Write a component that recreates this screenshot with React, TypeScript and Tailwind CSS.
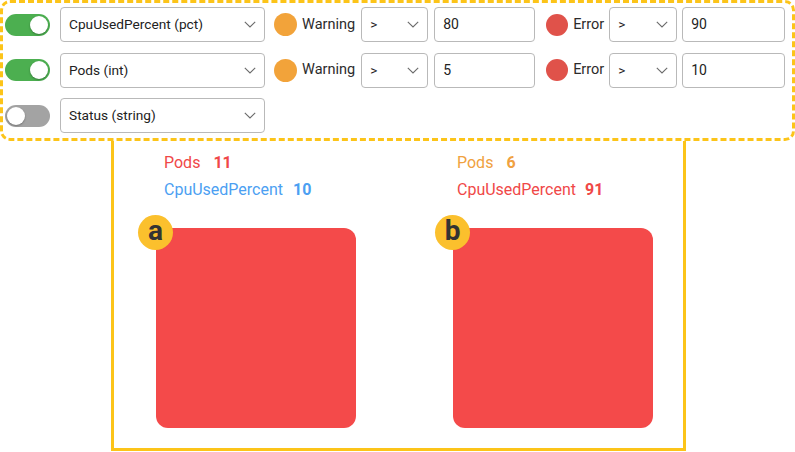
import React from "react";

type Level = { value: string };

function Toggle({ on }: { on: boolean }) {
  return (
    <div
      className={`w-[45px] h-[22px] rounded-full flex items-center px-[2px] ${
        on ? "bg-[#4caf50] justify-end" : "bg-[#a3a3a3] justify-start"
      }`}
    >
      <div className="w-[18px] h-[18px] rounded-full bg-white shadow-[0_1px_2px_rgba(0,0,0,0.3)]" />
    </div>
  );
}

function Chevron() {
  return (
    <svg width="12" height="7" viewBox="0 0 12 7" className="shrink-0">
      <polyline points="0.8,0.8 6,6 11.2,0.8" fill="none" stroke="#6b6b6b" strokeWidth="1.1" />
    </svg>
  );
}

function Select({ label, width }: { label: string; width: string }) {
  return (
    <div
      className={`${width} h-[35px] border border-[#b9b9b9] rounded-[4px] flex items-center justify-between pl-[8px] pr-[8px] text-[13.7px] text-[#222]`}
    >
      <span>{label}</span>
      <Chevron />
    </div>
  );
}

function Input({ value, width }: { value: string; width: string }) {
  return (
    <div
      className={`${width} h-[35px] border border-[#b9b9b9] rounded-[4px] flex items-center pl-[8px] text-[14px] text-[#222]`}
    >
      {value}
    </div>
  );
}

function Row({ on, field, levels }: { on: boolean; field: string; levels?: [Level, Level] }) {
  return (
    <div className="flex items-center h-[35px]">
      <Toggle on={on} />
      <div className="ml-[10px]">
        <Select label={field} width="w-[205px]" />
      </div>
      {levels && (
        <>
          <div className="ml-[9px] w-[23px] h-[23px] rounded-full bg-[#f2a33a]" />
          <span className="ml-[5px] text-[14.5px] text-[#2b2b2b]">Warning</span>
          <div className="ml-[6px]">
            <Select label=">" width="w-[67px]" />
          </div>
          <div className="ml-[6px]">
            <Input value={levels[0].value} width="w-[101px]" />
          </div>
          <div className="ml-[11px] w-[22px] h-[22px] rounded-full bg-[#e0524a]" />
          <span className="ml-[5px] text-[14.5px] text-[#2b2b2b]">Error</span>
          <div className="ml-[5px]">
            <Select label=">" width="w-[68px]" />
          </div>
          <div className="ml-[5px]">
            <Input value={levels[1].value} width="w-[103px]" />
          </div>
        </>
      )}
    </div>
  );
}

function Node({
  letter,
  lines,
  textIndent,
}: {
  letter: string;
  lines: { name: string; value: string; color: string; gap: string }[];
  textIndent: string;
}) {
  return (
    <div className="w-[200px] flex flex-col">
      <div className={`${textIndent} pt-[7.5px] flex flex-col text-[16px] leading-[27px]`}>
        {lines.map((l) => (
          <div key={l.name} className={`flex ${l.color}`}>
            <span>{l.name}</span>
            <span className={`${l.gap} font-bold`}>{l.value}</span>
          </div>
        ))}
      </div>
      <div className="relative mt-[25.5px] w-[200px] h-[200px] rounded-[12px] bg-[#f44a4a]">
        <div className="absolute left-[-18px] top-[-13px] w-[35px] h-[35px] rounded-full bg-[#fbc02d] flex items-center justify-center text-[28px] font-bold text-[#333] leading-none pb-[3px]">
          {letter}
        </div>
      </div>
    </div>
  );
}

export default function App() {
  return (
    <div className="w-[795px] h-[452px] bg-white overflow-hidden font-['Roboto',sans-serif]">
      <div className="relative z-10 h-[141px] rounded-[10px] border-[3px] border-dashed border-[#fcc419] bg-white pl-[2px] pt-[4px] flex flex-col gap-[10.5px]">
        <Row on field="CpuUsedPercent (pct)" levels={[{ value: "80" }, { value: "90" }]} />
        <Row on field="Pods (int)" levels={[{ value: "5" }, { value: "10" }]} />
        <Row on={false} field="Status (string)" />
      </div>
      <div className="ml-[111px] w-[575px] h-[310px] border-x-[3px] border-b-[3px] border-[#fcc419] flex pl-[42px] gap-[97px]">
        <Node
          letter="a"
          textIndent="pl-[8px]"
          lines={[
            { name: "Pods", value: "11", color: "text-[#f04848]", gap: "ml-[13px]" },
            { name: "CpuUsedPercent", value: "10", color: "text-[#4c9ff2]", gap: "ml-[10px]" },
          ]}
        />
        <Node
          letter="b"
          textIndent="pl-[4px]"
          lines={[
            { name: "Pods", value: "6", color: "text-[#f0a140]", gap: "ml-[13px]" },
            { name: "CpuUsedPercent", value: "91", color: "text-[#f04848]", gap: "ml-[9px]" },
          ]}
        />
      </div>
    </div>
  );
}
